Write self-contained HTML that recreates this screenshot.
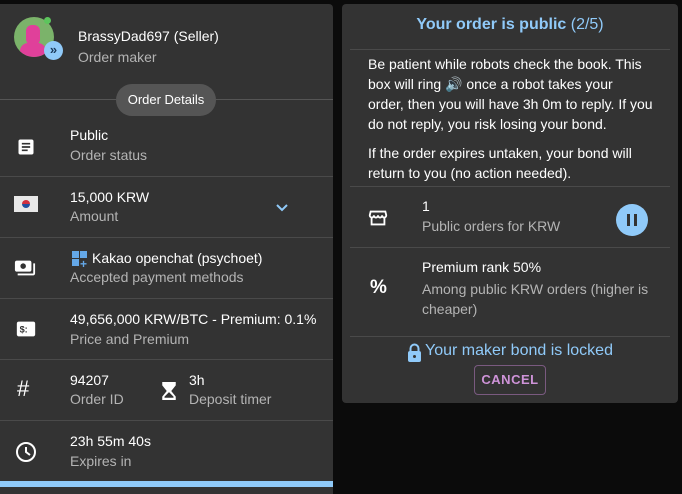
<!DOCTYPE html>
<html><head><meta charset="utf-8"><style>
*{margin:0;padding:0;box-sizing:border-box}
html,body{width:682px;height:494px;overflow:hidden}
body{background:#0b0b0b;font-family:"Liberation Sans",sans-serif;color:#fff;position:relative;font-size:14px}
.p{position:absolute;background:#333;border-radius:4px}
.abs{position:absolute}
.t{font-size:14px;color:#fff;white-space:nowrap}
.s{font-size:14px;color:#b4b4b4;white-space:nowrap}
.hr{position:absolute;height:1px;background:#4a4a4a}
</style></head><body>
<div class="p" style="left:0;top:4px;width:333px;height:490px;border-radius:0 4px 0 0">
 <div class="abs" style="left:14px;top:13px;width:40px;height:40px;border-radius:50%;background:#7bb36a;overflow:hidden">
  <div class="abs" style="left:12px;top:8px;width:14px;height:20px;border-radius:6px;background:#e0409a"></div>
  <div class="abs" style="left:6px;top:26px;width:26px;height:16px;border-radius:8px 8px 0 0;background:#e0409a"></div>
 </div>
 <div class="abs" style="left:44px;top:13px;width:7px;height:7px;border-radius:50%;background:#5cc55c"></div>
 <div class="abs" style="left:44px;top:37px;width:19px;height:19px;border-radius:50%;background:#90caf9;color:#1a3a5a;font-size:13px;font-weight:bold;text-align:center;line-height:18px">»</div>
 <div class="abs t" style="left:78px;top:24px">BrassyDad697 (Seller)</div>
 <div class="abs s" style="left:78px;top:45px">Order maker</div>
 <div class="hr" style="left:0;top:95px;width:333px;background:#555"></div>
 <div class="abs" style="left:116px;top:80px;width:100px;height:32px;border-radius:16px;background:#555;text-align:center;line-height:32px;font-size:13px">Order Details</div>
 <svg class="abs" style="left:16px;top:133px" width="20" height="20" viewBox="0 0 24 24"><path fill="#fff" d="M19 3H5c-1.1 0-2 .9-2 2v14c0 1.1.9 2 2 2h14c1.1 0 2-.9 2-2V5c0-1.1-.9-2-2-2zm-5 14H7v-2h7v2zm3-4H7v-2h10v2zm0-4H7V7h10v2z"/></svg>
 <div class="abs t" style="left:70px;top:123px">Public</div>
 <div class="abs s" style="left:70px;top:143px">Order status</div>
 <div class="hr" style="left:0;top:172px;width:333px"></div>
 <div class="abs" style="left:14px;top:192px;width:24px;height:16px;background:#e8e8e8"><div style="margin:4px auto;width:8px;height:8px;border-radius:50%;background:linear-gradient(#d03040 50%,#2050a0 50%)"></div></div>
 <div class="abs t" style="left:70px;top:185px">15,000 KRW</div>
 <div class="abs s" style="left:70px;top:204px">Amount</div>
 <svg class="abs" style="left:275px;top:199px" width="14" height="10" viewBox="0 0 14 10"><path d="M2 2l5 5 5-5" stroke="#90caf9" stroke-width="2" fill="none"/></svg>
 <div class="hr" style="left:0;top:233px;width:333px"></div>
 <svg class="abs" style="left:14px;top:253px" width="22" height="22" viewBox="0 0 24 24"><path fill="#fff" d="M19 14V6c0-1.1-.9-2-2-2H3c-1.1 0-2 .9-2 2v8c0 1.1.9 2 2 2h14c1.1 0 2-.9 2-2zm-9-1c-1.66 0-3-1.34-3-3s1.34-3 3-3 3 1.34 3 3-1.34 3-3 3zm13-6v11c0 1.1-.9 2-2 2H4v-2h17V7h2z"/></svg>
 <div class="abs" style="left:72px;top:247px;width:16px;height:16px">
  <div class="abs" style="left:0;top:0;width:7px;height:7px;background:#64a8e8"></div><div class="abs" style="left:8px;top:0;width:7px;height:7px;background:#64a8e8"></div><div class="abs" style="left:0;top:8px;width:7px;height:7px;background:#64a8e8"></div>
  <div class="abs" style="left:8px;top:6px;color:#64a8e8;font-size:12px;font-weight:bold">+</div></div>
 <div class="abs t" style="left:92px;top:246px">Kakao openchat (psychoet)</div>
 <div class="abs s" style="left:70px;top:265px">Accepted payment methods</div>
 <div class="hr" style="left:0;top:294px;width:333px"></div>
 <svg class="abs" style="left:15px;top:314px" width="22" height="22" viewBox="0 0 24 24"><path fill="#fff" d="M20 4H4c-1.1 0-2 .9-2 2v12c0 1.1.9 2 2 2h16c1.1 0 2-.9 2-2V6c0-1.1-.9-2-2-2z"/><text x="5" y="16" font-size="10" font-weight="bold" fill="#333" font-family="Liberation Sans">$:</text></svg>
 <div class="abs t" style="left:70px;top:307px">49,656,000 KRW/BTC - Premium: 0.1%</div>
 <div class="abs s" style="left:70px;top:327px">Price and Premium</div>
 <div class="hr" style="left:0;top:355px;width:333px"></div>
 <div class="abs" style="left:17px;top:372px;font-size:22px">#</div>
 <div class="abs t" style="left:70px;top:368px">94207</div>
 <div class="abs s" style="left:70px;top:387px">Order ID</div>
 <svg class="abs" style="left:162px;top:378px" width="14" height="18" viewBox="0 0 12 16"><path fill="#fff" d="M0 0h12v3L8 8l4 5v3H0v-3l4-5L0 3z M2 14h8v-1L6 9 2 13z"/></svg>
 <div class="abs t" style="left:189px;top:368px">3h</div>
 <div class="abs s" style="left:189px;top:387px">Deposit timer</div>
 <div class="hr" style="left:0;top:416px;width:333px"></div>
 <svg class="abs" style="left:14px;top:436px" width="24" height="24" viewBox="0 0 24 24"><circle cx="12" cy="12" r="9" stroke="#fff" stroke-width="2" fill="none"/><path d="M12 7v5l4 3" stroke="#fff" stroke-width="2" fill="none"/></svg>
 <div class="abs t" style="left:70px;top:429px">23h 55m 40s</div>
 <div class="abs s" style="left:70px;top:449px">Expires in</div>
 <div class="abs" style="left:0;top:477px;width:333px;height:6px;background:#90caf9"></div>
</div>

<div class="p" style="left:342px;top:4px;width:336px;height:399px">
 <div class="abs" style="left:0;top:12px;width:336px;text-align:center;font-size:16px;font-weight:bold;color:#90caf9">Your order is public <span style="font-weight:normal">(2/5)</span></div>
 <div class="hr" style="left:8px;top:45px;width:320px"></div>
 <div class="abs" style="left:26px;top:50px;width:300px;font-size:14px;line-height:20px;white-space:nowrap">Be patient while robots check the book. This<br>box will ring 🔊 once a robot takes your<br>order, then you will have 3h 0m to reply. If you<br>do not reply, you risk losing your bond.</div>
 <div class="abs" style="left:26px;top:139px;width:300px;font-size:14px;line-height:20px;white-space:nowrap">If the order expires untaken, your bond will<br>return to you (no action needed).</div>
 <div class="hr" style="left:8px;top:182px;width:320px"></div>
 <svg class="abs" style="left:25px;top:203px" width="22" height="22" viewBox="0 0 24 24"><path d="M4 5h16l1 4c0 1.5-1 2.5-2.3 2.5S16.5 10.5 16.5 9c0 1.5-1 2.5-2.25 2.5S12 10.5 12 9c0 1.5-1 2.5-2.25 2.5S7.5 10.5 7.5 9c0 1.5-1 2.5-2.2 2.5S3 10.5 3 9zM5 12v7h14v-7" stroke="#fff" stroke-width="2" fill="none"/></svg>
 <div class="abs t" style="left:80px;top:194px">1</div>
 <div class="abs s" style="left:80px;top:214px">Public orders for KRW</div>
 <div class="abs" style="left:274px;top:200px;width:32px;height:32px;border-radius:50%;background:#90caf9"><div class="abs" style="left:11px;top:10px;width:3px;height:12px;background:#333"></div><div class="abs" style="left:18px;top:10px;width:3px;height:12px;background:#333"></div></div>
 <div class="hr" style="left:8px;top:243px;width:320px"></div>
 <div class="abs" style="left:28px;top:273px;font-size:19px;font-weight:bold">%</div>
 <div class="abs t" style="left:80px;top:255px">Premium rank 50%</div>
 <div class="abs s" style="left:80px;top:275px;white-space:normal;width:250px;line-height:20px">Among public KRW orders (higher is cheaper)</div>
 <div class="hr" style="left:8px;top:332px;width:320px"></div>
 <svg class="abs" style="left:65px;top:339px" width="15" height="19" viewBox="0 0 15 19"><path d="M3.5 8V5.5a4 4 0 0 1 8 0V8" stroke="#90caf9" stroke-width="2" fill="none"/><rect x="1" y="8" width="13" height="11" rx="2" fill="#90caf9"/><circle cx="7.5" cy="13.5" r="1.5" fill="#333"/></svg>
 <div class="abs" style="left:83px;top:338px;font-size:16px;color:#90caf9">Your maker bond is locked</div>
 <div class="abs" style="left:132px;top:361px;width:72px;height:30px;border:1px solid #7a5a80;border-radius:4px;color:#ce93d8;font-size:13px;font-weight:bold;text-align:center;line-height:28px;letter-spacing:.5px">CANCEL</div>
</div>
</body></html>
